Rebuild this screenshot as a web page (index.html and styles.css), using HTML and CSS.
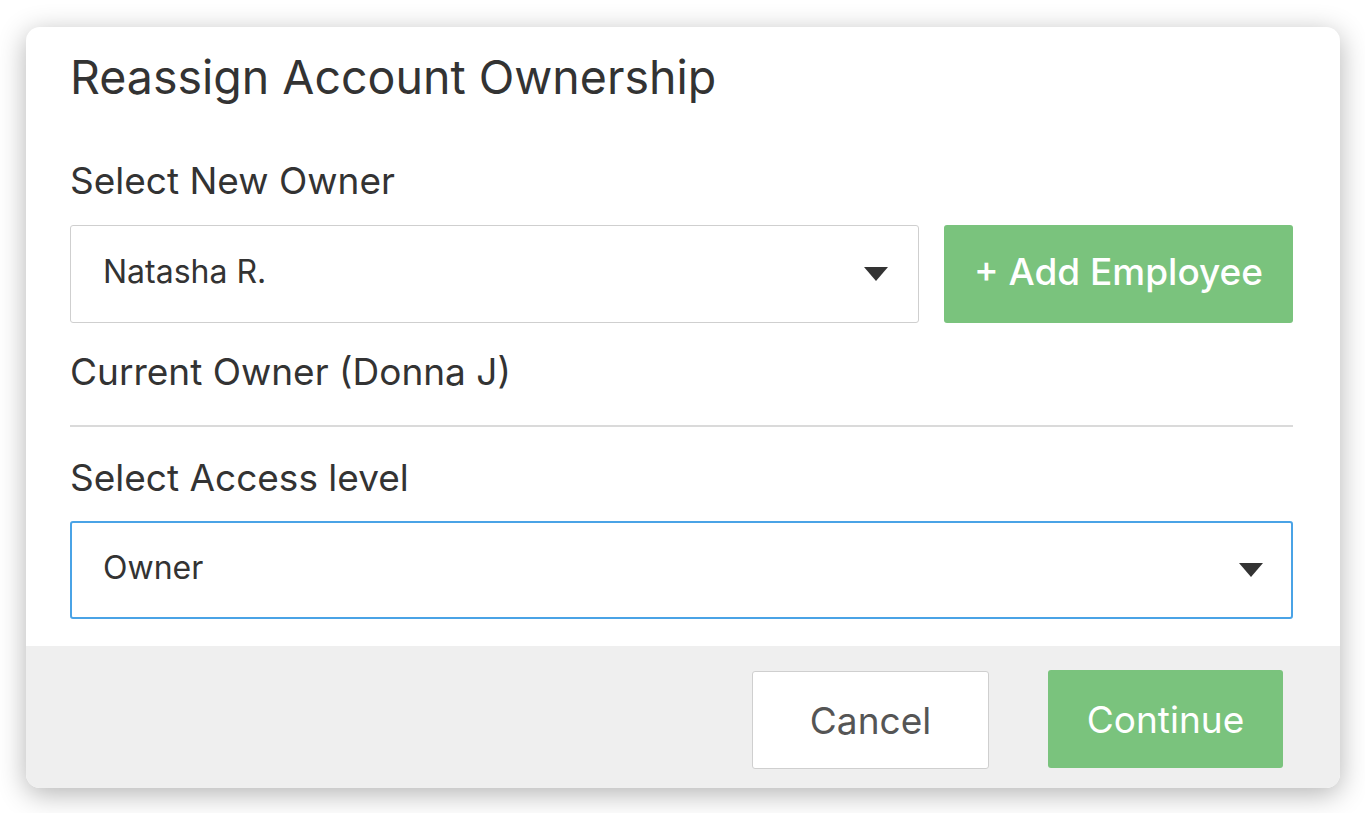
FILE: index.html
```html
<!DOCTYPE html>
<html>
<head>
<meta charset="utf-8">
<link rel="stylesheet" href="styles.css">
</head>
<body>
<div class="modal">
  <div class="body">
    <h1 class="title">Reassign Account Ownership</h1>
    <div class="label first">Select New Owner</div>
    <div class="row">
      <div class="select owner-select">
        <span class="value">Natasha R.</span>
        <svg class="caret" width="24" height="14" viewBox="0 0 24 14"><path d="M0 0H24L12 14Z" fill="#333"/></svg>
      </div>
      <button class="btn green add">+ Add Employee</button>
    </div>
    <div class="label current">Current Owner (Donna J)</div>
    <hr class="divider">
    <div class="label access">Select Access level</div>
    <div class="select focused">
      <span class="value">Owner</span>
      <svg class="caret" width="24" height="14" viewBox="0 0 24 14"><path d="M0 0H24L12 14Z" fill="#333"/></svg>
    </div>
  </div>
  <div class="footer">
    <button class="btn cancel">Cancel</button>
    <button class="btn green continue">Continue</button>
  </div>
</div>
</body>
</html>
```
FILE: styles.css
```css
html, body {
  margin: 0;
  padding: 0;
  background: #fff;
}
body {
  font-family: Inter, Lato, sans-serif;
  color: #333;
  padding: 27px 25px 25px 26px;
}
.modal {
  width: 1314px;
  height: 761px;
  background: #fff;
  border-radius: 14px;
  box-shadow: 0 6px 28px rgba(0,0,0,0.3);
  display: flex;
  flex-direction: column;
  overflow: hidden;
}
.body {
  flex: 1;
  padding: 0 47px 0 44px;
  display: flex;
  flex-direction: column;
}
.title {
  margin: 0;
  font-weight: 400;
  font-size: 46.5px;
  line-height: 52px;
  padding-top: 24px;
  color: #333;
}
.label {
  font-size: 37px;
  line-height: 44px;
  color: #333;
}
.label.first { margin-top: 56px; }
.row {
  display: flex;
  gap: 25px;
  margin-top: 22px;
}
.select {
  box-sizing: border-box;
  height: 98px;
  border: 1px solid #cfcfcf;
  border-radius: 3px;
  display: flex;
  align-items: center;
  justify-content: space-between;
  padding: 0 30px 0 32px;
  background: #fff;
}
.owner-select { flex: 1; }
.select .value {
  font-size: 32px;
  color: #333;
  margin-top: -5px;
}
.caret { display: block; }
.btn {
  box-sizing: border-box;
  font-family: Inter, Lato, sans-serif;
  height: 98px;
  border-radius: 3px;
  border: none;
  font-size: 37px;
  padding: 0;
}
.green {
  background: #7ac37d;
  color: #fff;
}
.add {
  width: 349px;
  font-weight: 500;
  padding-bottom: 5px;
}
.label.current { margin-top: 27px; }
.divider {
  border: none;
  border-top: 2px solid #dadada;
  margin: 31px 0 0;
}
.label.access { margin-top: 29px; }
.select.focused {
  margin-top: 21px;
  border: 2px solid #4aa3e6;
  padding: 0 28px 0 31px;
}
.footer {
  height: 142px;
  background: #efefef;
  display: flex;
  justify-content: flex-end;
  align-items: flex-start;
  padding: 24px 57px 0 0;
  box-sizing: border-box;
  gap: 59px;
}
.cancel {
  width: 237px;
  background: #fff;
  border: 1px solid #cfcfcf;
  color: #555;
  margin-top: 1px;
}
.continue { width: 235px; }
```
